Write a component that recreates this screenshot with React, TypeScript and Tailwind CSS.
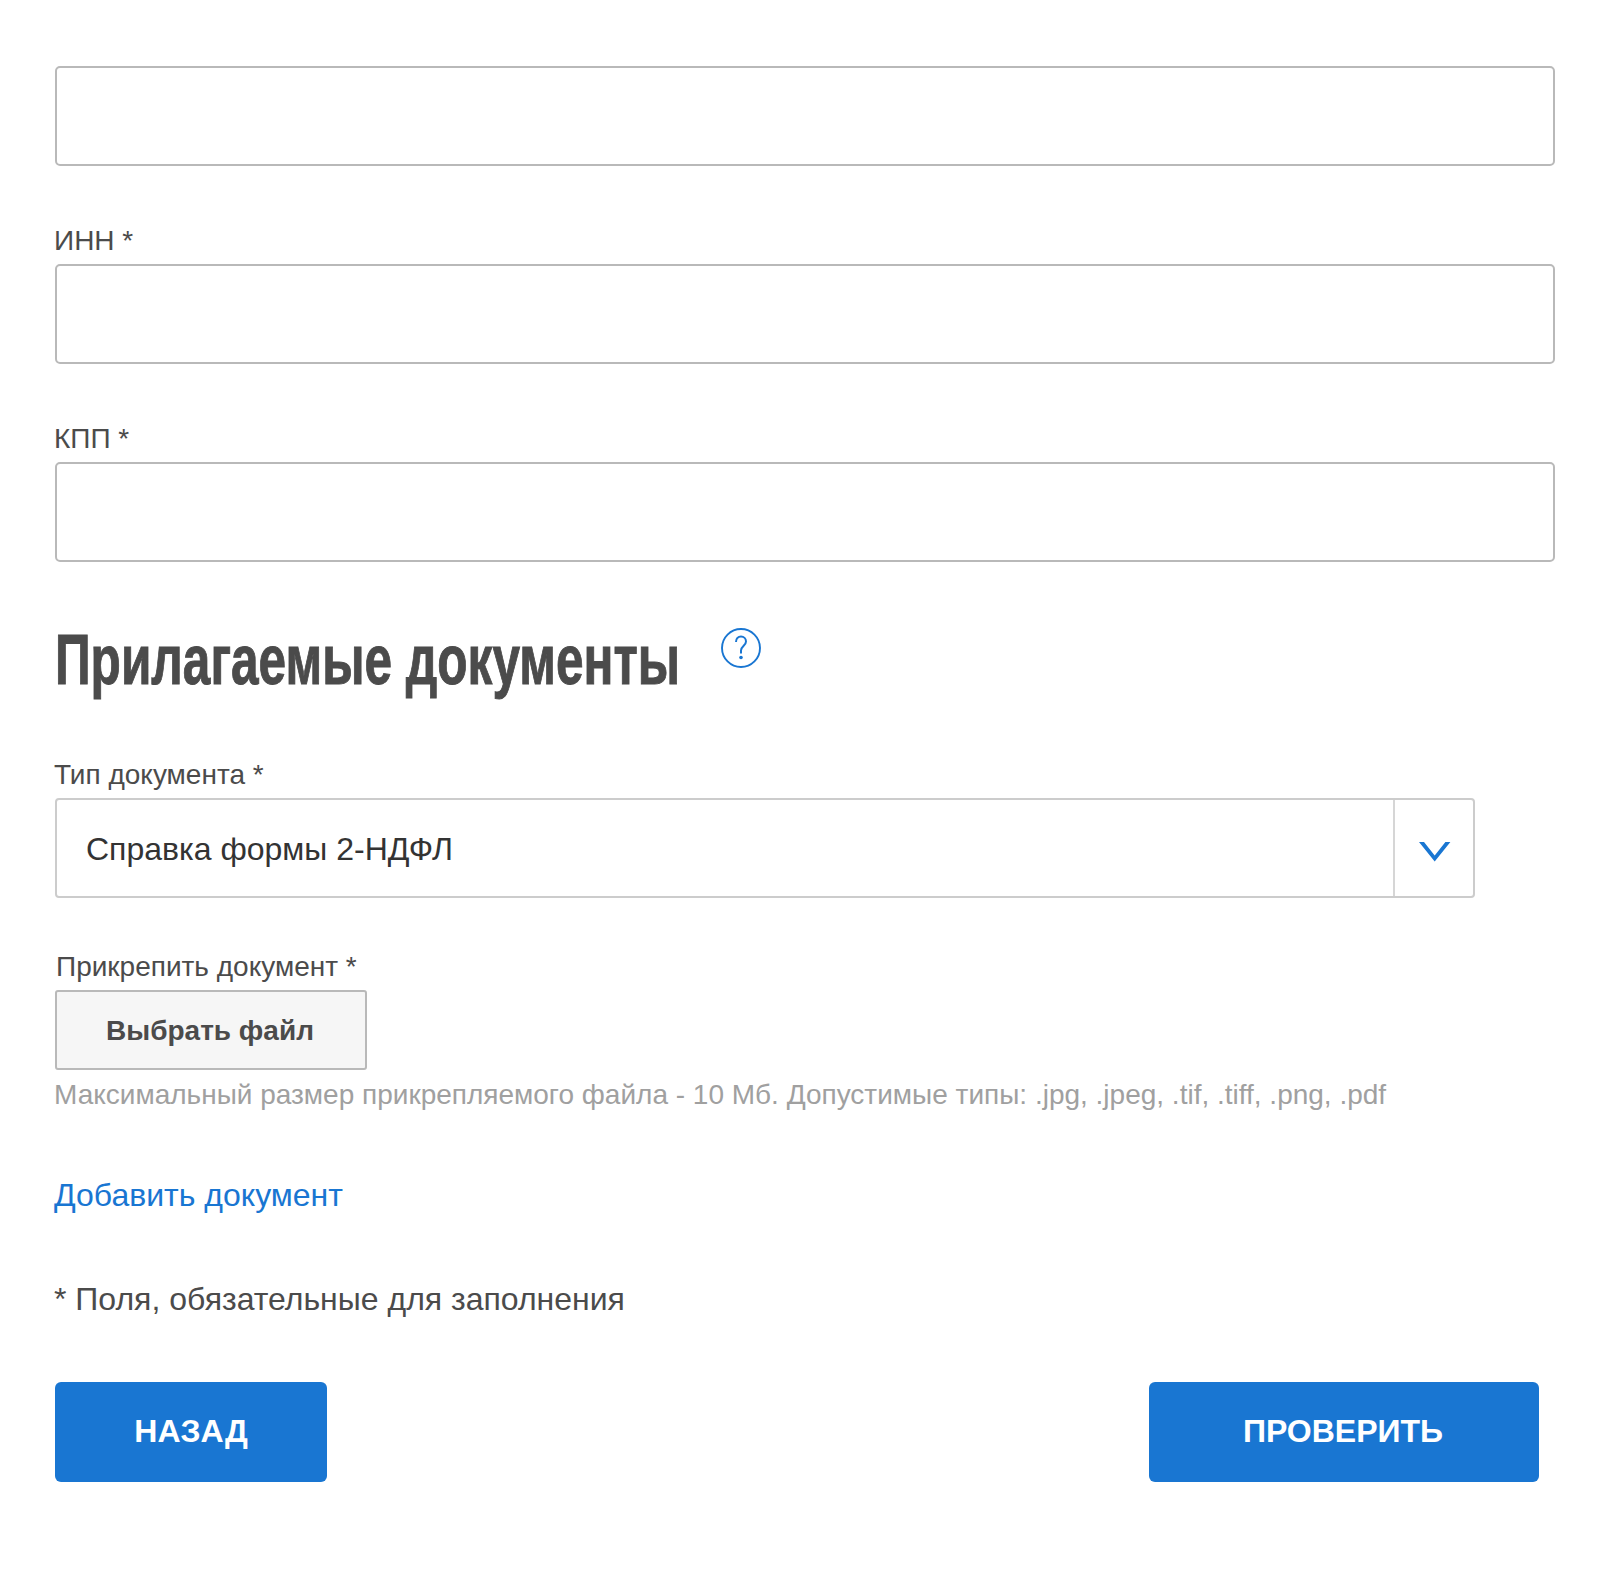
import React from "react";

const fieldClass = "block h-[100px] w-full rounded-[5px] border-2 border-[#b9b9b9] bg-white";

function Field({ label }: { label?: string }) {
  return (
    <div className="mb-[33px]">
      <label className="-ml-px block h-[65px] pt-[21px] text-[28px] leading-[42px] text-[#4b4b4b]">{label}</label>
      <input type="text" className={fieldClass} />
    </div>
  );
}

export default function App() {
  return (
    <div className="min-h-[1586px] bg-white pl-[55px] pr-[54px] font-['Liberation_Sans',Arial,sans-serif]">
      <div className="pr-[7px]">
        <div className="h-[66px]" />
        <input type="text" className={fieldClass} />
        <div className="mb-[33px]" />
        <Field label="ИНН *" />
        <Field label="КПП *" />
      </div>

      {/* Attached documents */}
      <div className="mt-[58px] flex items-start">
        <div className="w-[628px]">
          <h2 className="origin-left scale-x-[0.708] whitespace-nowrap text-[70px] font-bold leading-[80px] text-[#4b4b4b] [-webkit-text-stroke:1px_#4b4b4b]">
            Прилагаемые документы
          </h2>
        </div>
        <svg className="ml-[38px] mt-[8px]" width="40" height="40" viewBox="0 0 40 40" fill="none">
          <circle cx="20" cy="20" r="19" stroke="#1976d2" strokeWidth="1.9" />
          <path d="M15 14c0-3.4 2.2-5.6 5-5.6s5 2.2 5 5c0 4.4-5 4.8-5 9v3" stroke="#1976d2" strokeWidth="2" />
          <circle cx="20" cy="29.5" r="1.8" fill="#1976d2" />
        </svg>
      </div>

      <label className="-ml-px mt-[52px] block text-[28px] leading-[46px] text-[#4b4b4b]">Тип документа *</label>
      <div className="flex h-[100px] w-[1420px] rounded-[4px] border-2 border-[#cccccc]">
        <div className="flex flex-1 items-center pl-[29px] pt-px text-[32px] text-[#333333]">Справка формы 2-НДФЛ</div>
        <div className="flex w-[80px] items-center justify-center border-l-2 border-[#d6d6d6] pl-[2px] pt-[8px]">
          <svg width="32" height="20" viewBox="0 0 32 20" fill="#1976d2">
            <path d="M0 0H5L15.7 13.4L26.4 0H31.4L15.7 19.6Z" />
          </svg>
        </div>
      </div>

      <label className="-ml-px mt-[46px] block pl-[2px] text-[28px] leading-[46px] text-[#4b4b4b]">Прикрепить документ *</label>
      <button className="flex h-[80px] w-[312px] items-center justify-center rounded-[3px] border-2 border-[#b9b9b9] bg-[#f6f6f6] pr-[2px] pt-px text-[28px] font-bold text-[#4b4b4b]">
        Выбрать файл
      </button>
      <p className="-ml-px mt-[2px] text-[28px] leading-[46px] text-[#a0a0a0]">
        Максимальный размер прикрепляемого файла - 10 Мб. Допустимые типы: .jpg, .jpeg, .tif, .tiff, .png, .pdf
      </p>

      <a href="#" className="-ml-px mt-[52px] block text-[32px] leading-[50px] text-[#1976d2]">Добавить документ</a>

      <p className="-ml-px mt-[55px] text-[32px] leading-[48px] text-[#4b4b4b]">* Поля, обязательные для заполнения</p>

      <div className="mt-[59px] flex justify-between pr-[23px]">
        <button className="h-[100px] w-[272px] rounded-[6px] bg-[#1976d2] pb-[3px] text-[32px] font-bold text-white">НАЗАД</button>
        <button className="h-[100px] w-[390px] rounded-[6px] bg-[#1976d2] pb-[3px] pr-[2px] text-[32px] font-bold text-white">ПРОВЕРИТЬ</button>
      </div>
    </div>
  );
}
